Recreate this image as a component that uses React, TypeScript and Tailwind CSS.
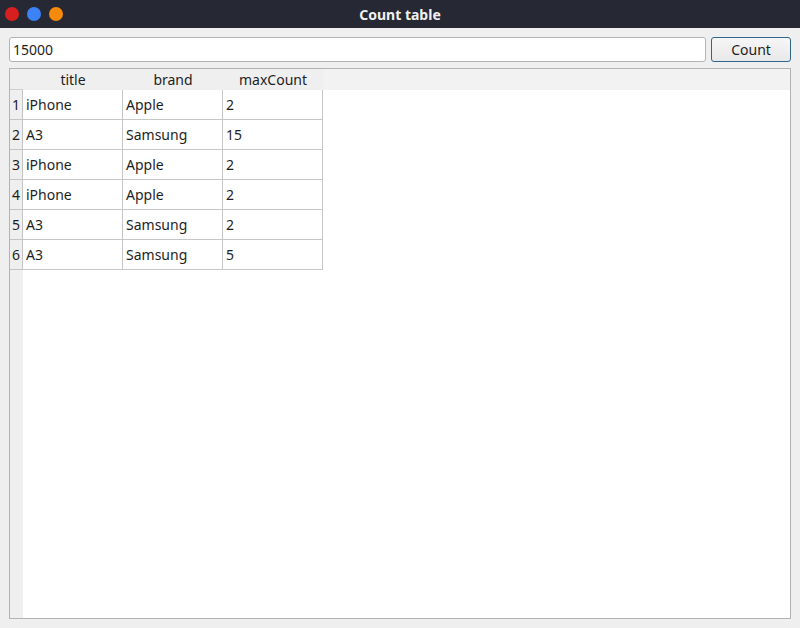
const rows = [
  { title: "iPhone", brand: "Apple", maxCount: "2" },
  { title: "A3", brand: "Samsung", maxCount: "15" },
  { title: "iPhone", brand: "Apple", maxCount: "2" },
  { title: "iPhone", brand: "Apple", maxCount: "2" },
  { title: "A3", brand: "Samsung", maxCount: "2" },
  { title: "A3", brand: "Samsung", maxCount: "5" },
];

const cols = ["title", "brand", "maxCount"];

export default function App() {
  return (
    <div className="flex h-[628px] w-[800px] flex-col bg-[#efefef] font-['Noto_Sans',sans-serif] text-[14px] text-[#1e1e1e]">
      <div className="relative flex h-[28px] items-center bg-[#262834]">
        <div className="flex items-center gap-[8px] pl-[5px]">
          <span className="h-[14px] w-[14px] rounded-full bg-[#d81f1f]" />
          <span className="h-[14px] w-[14px] rounded-full bg-[#3b82f6]" />
          <span className="h-[14px] w-[14px] rounded-full bg-[#f68a0c]" />
        </div>
        <span className="absolute inset-x-0 text-center text-[14px] font-bold text-[#f0f0f0]">
          Count table
        </span>
      </div>

      <div className="flex gap-[5px] px-[9px] pt-[9px]">
        <div className="flex h-[25px] flex-1 items-center rounded-[3px] border border-[#b4b4b4] bg-white pl-[3px]">
          15000
        </div>
        <button className="h-[25px] w-[80px] rounded-[3px] border border-[#2f6690] bg-gradient-to-b from-[#f6f6f6] to-[#e8e8e8] text-[14px]">
          Count
        </button>
      </div>

      <div className="mx-[9px] mb-[9px] mt-[6px] flex flex-1 border border-[#b3b3b3] bg-white">
        <div className="flex w-[13px] flex-col bg-[#efefef]">
          <div className="h-[21px] border-b border-[#cfcfcf]" />
          {rows.map((_, i) => (
            <div
              key={i}
              className="flex h-[30px] items-center justify-center border-b border-r border-[#c4c4c4] text-[14px]"
            >
              {i + 1}
            </div>
          ))}
        </div>
        <div className="flex flex-1 flex-col">
          <div className="flex h-[21px] bg-[#f2f2f2]">
            {cols.map((c) => (
              <div
                key={c}
                className="flex w-[100px] items-center justify-center bg-[#efefef] text-[14px]"
              >
                {c}
              </div>
            ))}
          </div>
          {rows.map((r, i) => (
            <div key={i} className="flex h-[30px]">
              {[r.title, r.brand, r.maxCount].map((v, j) => (
                <div
                  key={j}
                  className="flex w-[100px] items-center border-b border-r border-[#c6c6c6] pl-[3px]"
                >
                  {v}
                </div>
              ))}
            </div>
          ))}
        </div>
      </div>
    </div>
  );
}
